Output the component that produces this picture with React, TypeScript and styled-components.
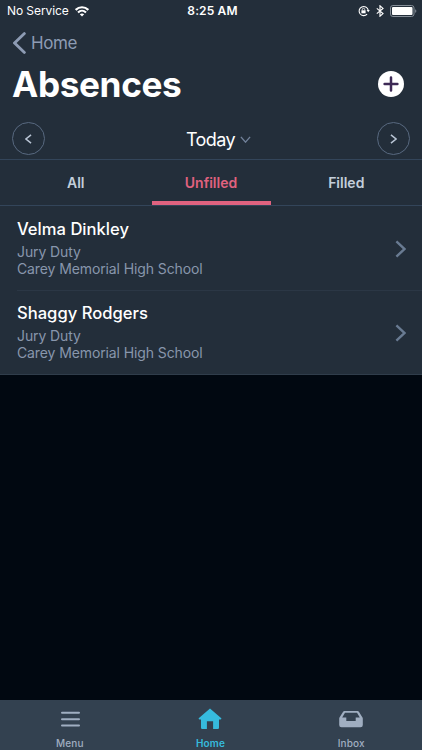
import React from 'react';
import styled, { createGlobalStyle } from 'styled-components';

const GlobalStyle = createGlobalStyle`
  * { box-sizing: border-box; }
  body { margin: 0; background: #010811; }
  button { background: none; border: 0; padding: 0; margin: 0; font: inherit; color: inherit; }
  svg { display: block; flex: none; }
`;

const Screen = styled.div`
  width: 422px;
  height: 750px;
  display: flex;
  flex-direction: column;
  overflow: hidden;
  background: #010811;
  color: #fff;
  font-family: Inter, "Liberation Sans", sans-serif;
`;

const StatusBar = styled.div`
  height: 22px;
  flex: none;
  display: grid;
  grid-template-columns: 1fr auto 1fr;
  align-items: center;
  padding: 0 4px 0 7px;
  background: #232e3a;
  font-size: 12px;
  line-height: 22px;
`;

const Carrier = styled.div`
  display: flex;
  align-items: center;
  gap: 6px;
  letter-spacing: -0.08px;
`;

const Clock = styled.div`
  font-weight: 600;
  letter-spacing: 0.15px;
`;

const StatusIcons = styled.div`
  display: flex;
  justify-content: flex-end;
  align-items: center;
  gap: 6px;
`;

const Header = styled.header`
  flex: none;
  height: 94px;
  background: #232e3a;
  padding: 0 18px 0 13px;
`;

const BackButton = styled.button`
  display: flex;
  align-items: center;
  gap: 5px;
  height: 42px;
  color: #8d9bb3;
  font-size: 17px;
  letter-spacing: -0.4px;
`;

const BackLabel = styled.span`
  padding-bottom: 1px;
`;

const TitleRow = styled.div`
  display: flex;
  align-items: center;
  justify-content: space-between;
  height: 40px;
`;

const Title = styled.h1`
  margin: 0 0 0 -1px;
  font-size: 35.2px;
  line-height: 40px;
  font-weight: 700;
  letter-spacing: -0.38px;
`;

const DateBar = styled.div`
  flex: none;
  height: 44px;
  display: flex;
  align-items: center;
  justify-content: space-between;
  padding: 2px 12px 0;
  background: #232e3a;
  border-bottom: 1px solid #33455a;
`;

const RoundButton = styled.button`
  width: 33px;
  height: 33px;
  display: grid;
  place-items: center;
  border: 1px solid #586980;
  border-radius: 50%;
  color: #b9c5d5;
`;

const DatePicker = styled.button`
  display: flex;
  align-items: center;
  gap: 5px;
  padding-left: 15px;
  padding-top: 2px;
  font-size: 18px;
  letter-spacing: -0.6px;
  color: #fff;
  svg { color: #718199; }
`;

const Tabs = styled.div`
  flex: none;
  height: 46px;
  display: grid;
  grid-template-columns: 151.5px 119px 151.5px;
  background: #232e3a;
  border-bottom: 1px solid #33455a;
`;

const Tab = styled.button<{ $active?: boolean }>`
  padding-top: 4px;
  border-bottom: 4px solid ${p => (p.$active ? '#e0627f' : 'transparent')};
  color: ${p => (p.$active ? '#e0627f' : '#c3cedb')};
  font-size: 14px;
  font-weight: 600;
  letter-spacing: 0;
`;

const List = styled.div`
  flex: none;
  background: #232e3a;
  border-bottom: 1px solid #303d4b;
`;

const Row = styled.div`
  height: 84px;
  margin-left: 17px;
  padding: 12px 16px 0 0;
  display: flex;
  justify-content: space-between;
  color: #8896ac;
  & + & { border-top: 1px solid #2b3745; padding-top: 11px; }
`;

const Name = styled.div`
  color: #fff;
  font-size: 16.6px;
  line-height: 22px;
  font-weight: 500;
  letter-spacing: 0;
  margin-bottom: 3px;
`;

const Detail = styled.div`
  font-size: 14px;
  line-height: 17px;
  letter-spacing: -0.11px;
`;

const RowArrow = styled.div`
  padding-top: 22px;
  color: #697b92;
`;

const TabBar = styled.nav`
  flex: none;
  height: 50px;
  margin-top: auto;
  display: grid;
  grid-template-columns: repeat(3, 1fr);
  background: #334150;
`;

const NavItem = styled.button<{ $active?: boolean }>`
  display: flex;
  flex-direction: column;
  align-items: center;
  padding: 8px 1px 0 0;
  color: ${p => (p.$active ? '#36bbde' : '#a0aec1')};
  font-size: 10px;
  line-height: 12px;
  font-weight: ${p => (p.$active ? 600 : 500)};
  letter-spacing: 0.15px;
`;

const NavIcon = styled.span`
  height: 29px;
`;

type ChevronProps = { w: number; h: number; stroke: number; dir: 'left' | 'right' | 'down'; round?: boolean };

function Chevron({ w, h, stroke, dir, round }: ChevronProps) {
  const i = stroke / 2 + 0.2;
  const d = {
    left: `M${w - i} ${i}L${i} ${h / 2}L${w - i} ${h - i}`,
    right: `M${i} ${i}L${w - i} ${h / 2}L${i} ${h - i}`,
    down: `M${i} ${i}L${w / 2} ${h - i}L${w - i} ${i}`,
  }[dir];
  return (
    <svg width={w} height={h} fill="none" stroke="currentColor" strokeWidth={stroke} strokeLinecap={round ? 'round' : 'butt'} strokeLinejoin="miter">
      <path d={d} />
    </svg>
  );
}

const Wifi = () => (
  <svg width="14" height="11" viewBox="0 0 14 11" fill="none" stroke="#fff" strokeWidth="2.1">
    <path d="M.7 3.9C4.2.4 9.8.4 13.3 3.9" />
    <path d="M3 6.4c2.3-2.2 5.7-2.2 8 0" />
    <path d="M7 10.6 4.8 8.3c1.2-1.1 3.2-1.1 4.4 0z" fill="#fff" stroke="none" />
  </svg>
);

const RotationLock = () => (
  <svg width="12" height="12" viewBox="0 0 12 12" fill="none" stroke="#fff">
    <path d="M9.1 9.2A4.6 4.6 0 1 1 10.2 5" strokeWidth="1.1" />
    <path d="M8.6 5h3.2l-1.6 2.2z" fill="#fff" stroke="none" />
    <rect x="3.4" y="5.3" width="4.2" height="3" fill="#fff" stroke="none" />
    <path d="M4.3 5.4V4.5a1.2 1.2 0 0 1 2.4 0v.9" strokeWidth=".8" />
  </svg>
);

const Bluetooth = () => (
  <svg width="8" height="12" viewBox="0 0 8 12" fill="none" stroke="#fff" strokeWidth="1.15">
    <path d="M.8 3.4 7 8.6 4 11.2V.8l3 2.6L.8 8.6" />
  </svg>
);

const Battery = () => (
  <svg width="28" height="12" viewBox="0 0 28 12" fill="none">
    <rect x=".5" y=".5" width="23.5" height="11" rx="2.4" stroke="#858e98" />
    <rect x="2" y="2" width="20.5" height="8" rx="1" fill="#fff" />
    <path d="M25.2 4.2c1.5.4 1.5 3.2 0 3.6z" fill="#858e98" />
  </svg>
);

const AddIcon = () => (
  <svg width="26" height="26" viewBox="0 0 26 26">
    <circle cx="13" cy="13" r="13" fill="#fff" />
    <path d="M13 6.6v12.8M6.6 13h12.8" stroke="#3d2955" strokeWidth="2.5" strokeLinecap="round" />
  </svg>
);

const MenuIcon = () => (
  <svg width="20" height="22" viewBox="0 0 20 22">
    <path d="M2 4.8h17M2 11.2h17M2 17.6h17" stroke="currentColor" strokeWidth="2" strokeLinecap="round" />
  </svg>
);

const HomeIcon = () => (
  <svg width="24" height="22" viewBox="0 0 24 22">
    <path d="M12 .4 23.3 10.2q.4 1-.8 1.3H21v8.3q0 1.2-1.2 1.2h-4.7v-7.8H8.9V21H4.2Q3 21 3 19.8v-8.3H1.5Q.3 11.2.7 10.2z" fill="currentColor" />
  </svg>
);

const InboxIcon = () => (
  <svg width="24" height="22" viewBox="0 0 24 22">
    <path fillRule="evenodd" d="M5.4 3h13.2q.8 0 1.3.8l3.6 5.8q.3.5.3 1.1V17q0 2.3-2.3 2.3h-19Q.2 19.3.2 17v-6.3q0-.6.3-1.1l3.6-5.8Q4.6 3 5.4 3zM6 4.8 3.2 9.4h4.1v3.5h9.4V9.4h4.1L18 4.8z" fill="currentColor" />
  </svg>
);

const absences = [
  { name: 'Velma Dinkley', reason: 'Jury Duty', school: 'Carey Memorial High School' },
  { name: 'Shaggy Rodgers', reason: 'Jury Duty', school: 'Carey Memorial High School' },
];

export default function App() {
  return (
    <>
      <GlobalStyle />
      <Screen>
        <StatusBar>
          <Carrier>No Service <Wifi /></Carrier>
          <Clock>8:25 AM</Clock>
          <StatusIcons><RotationLock /><Bluetooth /><Battery /></StatusIcons>
        </StatusBar>
        <Header>
          <BackButton><Chevron w={13} h={22} stroke={2.8} dir="left" round /><BackLabel>Home</BackLabel></BackButton>
          <TitleRow>
            <Title>Absences</Title>
            <button aria-label="Add absence"><AddIcon /></button>
          </TitleRow>
        </Header>
        <DateBar>
          <RoundButton aria-label="Previous day"><Chevron w={7} h={10} stroke={1.5} dir="left" /></RoundButton>
          <DatePicker>Today<Chevron w={11} h={7} stroke={1.4} dir="down" /></DatePicker>
          <RoundButton aria-label="Next day"><Chevron w={7} h={10} stroke={1.5} dir="right" /></RoundButton>
        </DateBar>
        <Tabs>
          <Tab>All</Tab>
          <Tab $active>Unfilled</Tab>
          <Tab>Filled</Tab>
        </Tabs>
        <List>
          {absences.map(a => (
            <Row key={a.name}>
              <div>
                <Name>{a.name}</Name>
                <Detail>{a.reason}</Detail>
                <Detail>{a.school}</Detail>
              </div>
              <RowArrow><Chevron w={11} h={18} stroke={2.4} dir="right" /></RowArrow>
            </Row>
          ))}
        </List>
        <TabBar>
          <NavItem><NavIcon><MenuIcon /></NavIcon>Menu</NavItem>
          <NavItem $active><NavIcon><HomeIcon /></NavIcon>Home</NavItem>
          <NavItem><NavIcon><InboxIcon /></NavIcon>Inbox</NavItem>
        </TabBar>
      </Screen>
    </>
  );
}
